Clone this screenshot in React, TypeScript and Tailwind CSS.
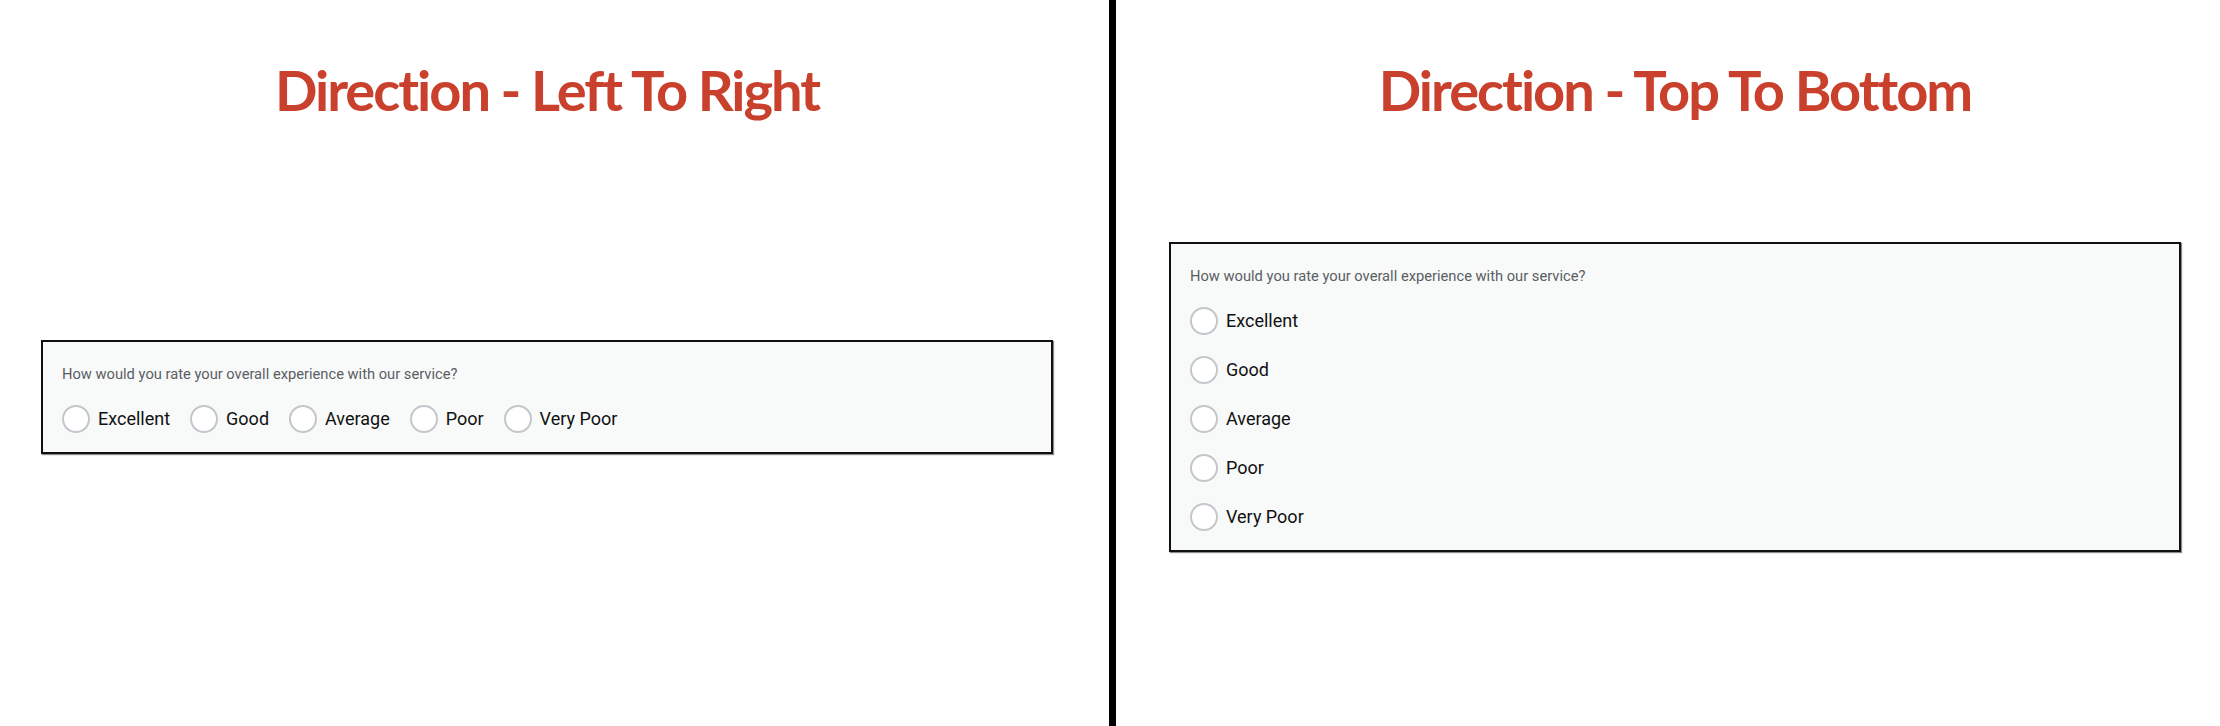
const OPTIONS = ['Excellent', 'Good', 'Average', 'Poor', 'Very Poor']

function Radio({ label }: { label: string }) {
  return (
    <label className="flex items-center gap-2 cursor-pointer">
      <span className="block w-[28px] h-[28px] rounded-full border-2 border-[#c3c7cc] bg-white" />
      <span className="text-[18px] leading-[28px] text-[#111]">{label}</span>
    </label>
  )
}

function Card({ vertical }: { vertical: boolean }) {
  return (
    <div className="w-[1012px] border-2 border-[#111] bg-[#f8f9f9] px-[19px] pt-[21px] pb-[19px] shadow-[1px_1px_1px_rgba(0,0,0,0.45)] flex flex-col gap-5">
      <p className="text-[14.7px] leading-[22px] text-[#5a5e63]">
        How would you rate your overall experience with our service?
      </p>
      <div className={vertical ? 'flex flex-col gap-[21px]' : 'flex flex-row gap-5'}>
        {OPTIONS.map((o) => (
          <Radio key={o} label={o} />
        ))}
      </div>
    </div>
  )
}

function Panel({ title, vertical, className }: { title: string; vertical: boolean; className: string }) {
  return (
    <div className={`flex flex-col h-[726px] ${className}`}>
      <div className="h-[140px] pt-[50px] flex justify-center">
        <h1 className="text-[56px] leading-[80px] h-[80px] font-bold text-[#c9402c] tracking-[-2px]" style={{ fontFamily: 'Lato, sans-serif' }}>
          {title}
        </h1>
      </div>
      <div className="flex-1 flex items-center justify-center pb-[72px]">
        <Card vertical={vertical} />
      </div>
    </div>
  )
}

export default function App() {
  return (
    <div className="flex w-[2220px] h-[726px] bg-white overflow-hidden" style={{ fontFamily: 'Roboto, sans-serif' }}>
      <Panel title="Direction - Left To Right" vertical={false} className="w-[1094px]" />
      <div className="ml-[15px] w-[7px] h-full bg-black" />
      <Panel title="Direction - Top To Bottom" vertical className="ml-[14px] flex-1" />
    </div>
  )
}
